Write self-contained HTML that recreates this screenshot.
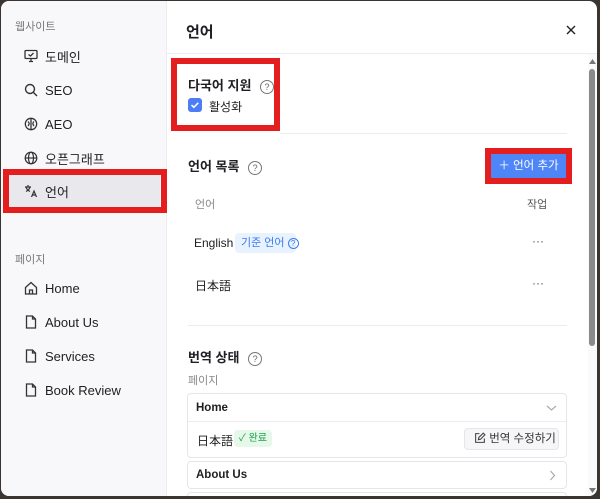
<!DOCTYPE html>
<html><head><meta charset="utf-8">
<style>
*{margin:0;padding:0;box-sizing:border-box}
body{width:600px;height:499px;background:#3a3530;position:relative;overflow:hidden;font-family:"Liberation Sans","Noto Sans CJK KR",sans-serif;color:#1f1f23}
.modal{position:absolute;left:1px;top:1px;width:596px;height:495px;background:#fff;border-radius:8px;overflow:hidden}
.side{position:absolute;left:0;top:0;width:166px;height:495px;background:#f8f8fa;border-right:1px solid #ececf0}
.abs{position:absolute;white-space:nowrap}
.lbl{font-size:11px;color:#777}
.item{position:absolute;left:23px;font-size:13px;display:flex;align-items:center;gap:7px;height:20px}
.item svg{width:14px;height:14px;flex:none}
.red{position:absolute;border:6px solid #e41e1e}
.q{display:inline-block;width:14px;height:14px;border:1.3px solid #777;border-radius:50%;font-size:9px;text-align:center;line-height:12px;color:#666;vertical-align:middle}
.hr{position:absolute;height:1px;background:#ececf0}
.card{position:absolute;left:186px;width:380px;border:1px solid #e6e6ea;border-radius:4px;background:#fff}
</style></head><body>
<div class="modal">
 <div class="side">
  <div class="abs lbl" style="left:14px;top:17px">웹사이트</div>
  <div class="item" style="top:45px"><svg viewBox="0 0 14 14" fill="none" stroke="#333" stroke-width="1.3"><rect x="1" y="1.5" width="12" height="8" rx="1"/><path d="M5 12.5h4M7 9.5v3M4.5 5.5l2 1.5 3-3"/></svg>도메인</div>
  <div class="item" style="top:79px"><svg viewBox="0 0 14 14" fill="none" stroke="#333" stroke-width="1.4"><circle cx="6" cy="6" r="4.5"/><path d="M9.5 9.5l3.5 3.5"/></svg>SEO</div>
  <div class="item" style="top:113px"><svg viewBox="0 0 14 14" fill="none" stroke="#333" stroke-width="1.3"><circle cx="7" cy="7" r="5.7"/><path d="M7 2v10M4 4.5c1.5 1 1.5 3 0 4.5M10 4.5c-1.5 1-1.5 3 0 4.5"/></svg>AEO</div>
  <div class="item" style="top:147px"><svg viewBox="0 0 14 14" fill="none" stroke="#333" stroke-width="1.2"><circle cx="7" cy="7" r="5.8"/><ellipse cx="7" cy="7" rx="2.5" ry="5.8"/><path d="M1.2 7h11.6"/></svg>오픈그래프</div>
  <div style="position:absolute;left:8px;top:174px;width:151px;height:32px;background:#e9e9ed"></div>
  <div class="red" style="left:2px;top:168px;width:164px;height:44px"></div>
  <div class="item" style="top:180px"><svg viewBox="0 0 14 14" fill="none" stroke="#333" stroke-width="1.2"><path d="M1 3h6M4 1v2M2 3c.5 2 2 3.5 4 4.5M6 3c-.5 2-2 3.5-4 4.5M7.5 13l2.5-6 2.5 6M8.3 11h3.4"/></svg>언어</div>
  <div class="abs lbl" style="left:14px;top:250px">페이지</div>
  <div class="item" style="top:277px"><svg viewBox="0 0 14 14" fill="none" stroke="#333" stroke-width="1.3"><path d="M1.5 6.5L7 1.5l5.5 5V13h-11z"/><path d="M5.5 13V9h3v4"/></svg>Home</div>
  <div class="item" style="top:311px"><svg viewBox="0 0 14 14" fill="none" stroke="#333" stroke-width="1.3"><path d="M2.5 1h6l3 3v9h-9z"/><path d="M8.5 1v3h3"/></svg>About Us</div>
  <div class="item" style="top:345px"><svg viewBox="0 0 14 14" fill="none" stroke="#333" stroke-width="1.3"><path d="M2.5 1h6l3 3v9h-9z"/><path d="M8.5 1v3h3"/></svg>Services</div>
  <div class="item" style="top:379px"><svg viewBox="0 0 14 14" fill="none" stroke="#333" stroke-width="1.3"><path d="M2.5 1h6l3 3v9h-9z"/><path d="M8.5 1v3h3"/></svg>Book Review</div>
 </div>
 <div class="abs" style="left:185px;top:20px;font-size:15px;font-weight:bold">언어</div>
 <svg class="abs" style="left:564px;top:23px" width="12" height="12" viewBox="0 0 12 12" stroke="#222" stroke-width="1.4"><path d="M2 2l8 8M10 2l-8 8"/></svg>
 <div class="hr" style="left:166px;top:52px;width:430px"></div>
 <div class="red" style="left:170px;top:57px;width:109px;height:73px"></div>
 <div class="abs" style="left:187px;top:74px;font-size:13px;font-weight:bold">다국어 지원 <span class="q" style="margin-left:5px;font-weight:normal">?</span></div>
 <div class="abs" style="left:187px;top:97px;width:14px;height:14px;background:#4d7df6;border-radius:3px"><svg width="14" height="14" viewBox="0 0 14 14" fill="none" stroke="#fff" stroke-width="1.5"><path d="M3.5 7l2.3 2.3 4.5-4.5"/></svg></div>
 <div class="abs" style="left:208px;top:97px;font-size:12px">활성화</div>
 <div class="hr" style="left:279px;top:132px;width:287px"></div>
 <div class="abs" style="left:187px;top:155px;font-size:13px;font-weight:bold">언어 목록 <span class="q" style="margin-left:5px;font-weight:normal">?</span></div>
 <div class="red" style="left:484px;top:147px;width:87px;height:36px"></div>
 <div class="abs" style="left:490px;top:153px;width:75px;height:24px;background:#4f86f7;color:#fff;font-size:11.5px;line-height:24px;text-align:center">＋ 언어 추가</div>
 <div class="abs" style="left:194px;top:195px;font-size:11px;color:#888">언어</div>
 <div class="abs" style="left:526px;top:195px;font-size:11px;color:#555">작업</div>
 <div class="abs" style="left:193px;top:235px;font-size:12px">English</div>
 <div class="abs" style="left:234px;top:232px;width:61px;height:20px;background:#e8f3ff;border-radius:4px;color:#3b7cf0;font-size:11px;line-height:20px;padding-left:6px">기준 언어 <span class="q" style="width:11px;height:11px;font-size:8px;line-height:9px;border-color:#3b7cf0;color:#3b7cf0">?</span></div>
 <div class="abs" style="left:531px;top:233px;font-size:12px;color:#555">···</div>
 <div class="abs" style="left:194px;top:276px;font-size:12px">日本語</div>
 <div class="abs" style="left:531px;top:275px;font-size:12px;color:#555">···</div>
 <div class="hr" style="left:187px;top:324px;width:379px"></div>
 <div class="abs" style="left:187px;top:346px;font-size:13px;font-weight:bold">번역 상태 <span class="q" style="margin-left:5px;font-weight:normal">?</span></div>
 <div class="abs" style="left:187px;top:371px;font-size:11px;color:#888">페이지</div>
 <div class="card" style="top:392px;height:65px">
  <div class="abs" style="left:8px;top:8px;font-size:11.5px;font-weight:bold">Home</div>
  <svg class="abs" style="left:358px;top:10px" width="11" height="8" viewBox="0 0 11 8" fill="none" stroke="#aaa" stroke-width="1.2"><path d="M1 2l4.5 4 4.5-4"/></svg>
  <div class="hr" style="left:0;top:27px;width:378px"></div>
  <div class="abs" style="left:9px;top:38px;font-size:12px">日本語</div>
  <div class="abs" style="left:46px;top:36px;width:38px;height:17px;background:#e6f8ea;border-radius:4px;color:#1e9e48;font-size:10px;line-height:17px;text-align:center">✓ 완료</div>
  <div class="abs" style="left:276px;top:34px;width:95px;height:22px;background:#f6f6f8;border:1px solid #e6e6ea;border-radius:4px;font-size:11.5px;line-height:20px;color:#333;padding-left:9px"><svg width="12" height="12" viewBox="0 0 11 11" fill="none" stroke="#444" stroke-width="1" style="vertical-align:-2px"><path d="M5 1.5H1.5v8h8V6M4 7l.4-2L8.5 1l1.5 1.5L6 6.6z"/></svg> 번역 수정하기</div>
 </div>
 <div class="card" style="top:460px;height:28px">
  <div class="abs" style="left:8px;top:7px;font-size:11.5px;font-weight:bold">About Us</div>
  <svg class="abs" style="left:361px;top:8px" width="7" height="11" viewBox="0 0 7 11" fill="none" stroke="#aaa" stroke-width="1.2"><path d="M1.5 1l4 4.5-4 4.5"/></svg>
 </div>
 <div class="card" style="top:491px;height:20px"></div>
 <div class="abs" style="left:587px;top:53px;width:9px;height:442px;background:#fafafa"></div>
 <svg class="abs" style="left:588px;top:58px" width="7" height="5"><path d="M0 5L3.5 0 7 5z" fill="#777"/></svg>
 <div class="abs" style="left:588px;top:68px;width:6px;height:277px;background:#8a8a8a;border-radius:3px"></div>
 <svg class="abs" style="left:588px;top:487px" width="7" height="5"><path d="M0 0L3.5 5 7 0z" fill="#777"/></svg>
</div>
</body></html>
